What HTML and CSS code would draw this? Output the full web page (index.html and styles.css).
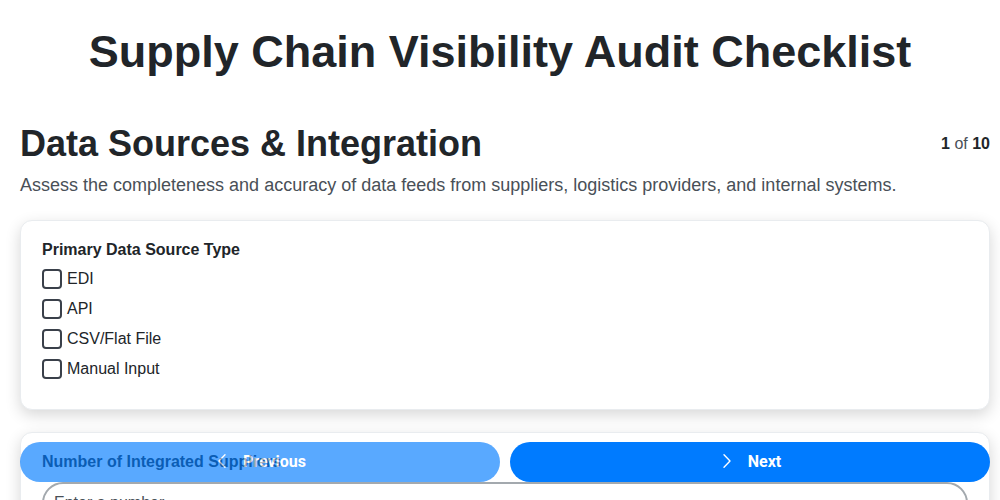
FILE: index.html
```html
<!DOCTYPE html>
<html lang="en">
<head>
    <meta charset="UTF-8">
    <meta name="viewport" content="width=device-width, initial-scale=1.0">
    <title>Supply Chain Visibility Audit Checklist</title>
    <link rel="stylesheet" href="styles.css">
</head>
<body>
    <h1 class="page-title">Supply Chain Visibility Audit Checklist</h1>

    <div class="container">
        <div class="section-header">
            <h2>Data Sources &amp; Integration</h2>
            <div class="step-count"><strong>1</strong> of <strong>10</strong></div>
        </div>
        <p class="section-desc">Assess the completeness and accuracy of data feeds from suppliers, logistics providers, and internal systems.</p>

        <div class="question-card">
            <label class="field-label">Primary Data Source Type</label>
            <div class="options">
                <label class="option"><input type="checkbox" name="source" value="edi"> EDI</label>
                <label class="option"><input type="checkbox" name="source" value="api"> API</label>
                <label class="option"><input type="checkbox" name="source" value="csv"> CSV/Flat File</label>
                <label class="option"><input type="checkbox" name="source" value="manual"> Manual Input</label>
            </div>
        </div>

        <div class="question-card">
            <label class="field-label" for="supplierCount">Number of Integrated Suppliers</label>
            <input type="number" id="supplierCount" class="text-input" placeholder="Enter a number">
        </div>
    </div>

    <div class="nav-buttons">
        <button class="nav-btn prev-btn" disabled>
            <svg width="16" height="16" viewBox="0 0 16 16"><polyline points="11,1.8 5,8 11,14.2" fill="none" stroke="currentColor" stroke-width="1.4" stroke-linecap="round" stroke-linejoin="round"/></svg>
            Previous
        </button>
        <button class="nav-btn next-btn">
            <svg width="16" height="16" viewBox="0 0 16 16"><polyline points="5,1.8 11,8 5,14.2" fill="none" stroke="currentColor" stroke-width="1.4" stroke-linecap="round" stroke-linejoin="round"/></svg>
            Next
        </button>
    </div>
</body>
</html>
```

FILE: styles.css
```css
body {
    font-family: 'Liberation Sans', Arial, sans-serif;
    margin: 0;
    padding: 0;
    color: #212529;
    background: #fff;
}

.page-title {
    font-size: 45px;
    line-height: 1.2;
    text-align: center;
    margin: 25px 0 43px;
}

.container {
    padding: 0 10px 80px 20px;
}

.section-header {
    display: flex;
    justify-content: space-between;
    align-items: center;
    margin-bottom: 7px;
}

.section-header h2 {
    font-size: 36px;
    line-height: 1.2;
    margin: 0;
}

.step-count {
    font-size: 16px;
    line-height: 24px;
    color: #495057;
}

.step-count strong {
    color: #212529;
}

.section-desc {
    font-size: 18px;
    line-height: 27px;
    color: #495057;
    margin: 0 0 21px;
}

.question-card {
    background: #fff;
    border: 1px solid #e9ecef;
    border-radius: 12px;
    padding: 17px 21px 20px;
    margin-bottom: 22px;
    box-shadow: 0 5px 15px rgba(0, 0, 0, 0.16);
}

.field-label {
    display: block;
    font-size: 16px;
    line-height: 24px;
    font-weight: bold;
    margin-bottom: 8px;
}

.options {
    margin-top: -1px;
}

.option {
    display: flex;
    align-items: center;
    gap: 5px;
    font-size: 16px;
    line-height: 20px;
    margin-bottom: 10px;
}

.option input {
    appearance: none;
    width: 20px;
    height: 20px;
    margin: 0;
    border: 2px solid #3a404a;
    border-radius: 4px;
    background: #fff;
}

.text-input {
    box-sizing: border-box;
    width: 100%;
    height: 42px;
    padding: 0 10px;
    font-family: inherit;
    font-size: 16px;
    border: 2px solid #a3a9ae;
    border-radius: 22px;
}

.text-input::placeholder {
    color: #495057;
}

.nav-buttons {
    position: fixed;
    left: 20px;
    right: 10px;
    bottom: 18px;
    display: flex;
    gap: 10px;
}

.nav-btn {
    flex: 1;
    height: 40px;
    padding: 0 0 2px;
    display: flex;
    align-items: center;
    justify-content: center;
    gap: 13px;
    border: none;
    border-radius: 20px;
    background-color: #007bff;
    color: white;
    font-family: Roboto, sans-serif;
    font-size: 16px;
    font-weight: bold;
    cursor: pointer;
}

.nav-btn:disabled {
    opacity: 0.65;
    cursor: default;
}
```
